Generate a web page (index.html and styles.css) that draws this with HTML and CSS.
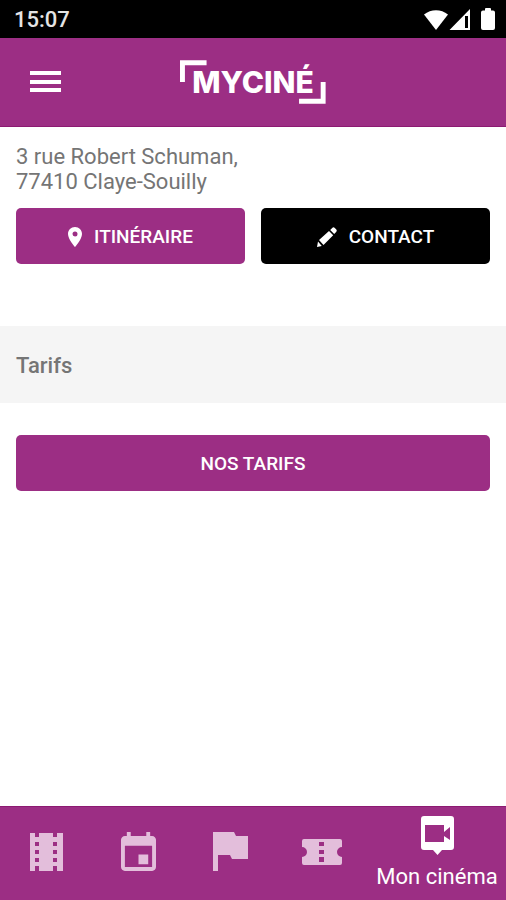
FILE: index.html
```html
<!DOCTYPE html>
<html lang="fr">
<head>
  <meta charset="utf-8">
  <meta name="viewport" content="width=device-width, initial-scale=1">
  <title>MyCiné</title>
  <link rel="stylesheet" href="styles.css">
</head>
<body>
  <div class="status">
    <span class="clock">15:07</span>
    <svg class="status-icons" width="72" height="24" viewBox="0 0 72 24" aria-hidden="true">
      <path d="M0 6.500C7 .8 17 .8 24 6.500L12 22z"/>
      <path fill-rule="evenodd" d="M46 1v21H25.500zM41 8v12h3V8z"/>
      <path d="M61 2.500V1q0-1 1-1h4q1 0 1 1v1.500h2q2 0 2 2V20q0 2-2 2H59q-2 0-2-2V4.500q0-2 2-2z"/>
    </svg>
  </div>

  <header class="header">
    <button class="menu" type="button" aria-label="Menu">
      <svg width="32" height="24" viewBox="0 0 32 24"><path d="M0 1h31v4H0zM0 10h31v4H0zM0 18h31v4H0z"/></svg>
    </button>
    <div class="logo">
      <svg class="logo-frame" width="148" height="44" viewBox="0 0 148 44" aria-hidden="true">
        <path d="M0 0h27v5H5v17H0zM148 22v22h-27v-5h22V22z"/>
      </svg>
      <span>MYCINÉ</span>
    </div>
  </header>

  <main class="content">
    <address class="address">3 rue Robert Schuman,<br>77410 Claye-Souilly</address>
    <div class="actions">
      <button class="button" type="button">
        <svg class="pin" width="14" height="20" viewBox="0 0 14 20" aria-hidden="true"><path fill-rule="evenodd" d="M7 0C3 0 0 3 0 7c0 5.200 7 13 7 13s7-7.800 7-13c0-4-3-7-7-7zm0 4.500a2.500 2.500 0 1 1 0 5 2.500 2.500 0 0 1 0-5z"/></svg>
        ITINÉRAIRE
      </button>
      <button class="button button-dark" type="button">
        <svg width="20" height="20" viewBox="0 0 20 20" aria-hidden="true"><path d="M0 20l1-5.500L4.800 19zM2 13L12 4l4.200 4.200L6.500 18zM13.200 3l2-2q1.300-1.300 2.600 0l1.300 1.300q1.300 1.300 0 2.600l-1.900 2z"/></svg>
        CONTACT
      </button>
    </div>
    <h2 class="section">Tarifs</h2>
    <div class="prices"><button class="button" type="button">NOS TARIFS</button></div>
  </main>

  <nav class="tabs">
    <a class="tab" href="#films" aria-label="Films">
      <svg width="33" height="38" viewBox="0 0 33 38"><path fill-rule="evenodd" d="M0 0h5v4h4V0h14v4h4V0h6v38h-6v-5h-4v5H9v-5H5v5H0zM5 9v4h4V9zM5 17v4h4v-4zM5 25v4h4v-4zM23 9v4h4V9zM23 17v4h4v-4zM23 25v4h4v-4z"/></svg>
    </a>
    <a class="tab" href="#agenda" aria-label="Agenda">
      <svg width="35" height="39" viewBox="3 1 18 20" preserveAspectRatio="none"><path d="M17 12.500h-5v5h5zM16 1v2H8V1H6v2H5c-1.100 0-2 .9-2 2v14c0 1.100.9 2 2 2h14c1.100 0 2-.9 2-2V5c0-1.100-.9-2-2-2h-1V1zm3 18H5V8h14z"/></svg>
    </a>
    <a class="tab" href="#evenements" aria-label="Événements">
      <svg width="35" height="39" viewBox="0 0 35 39"><path d="M0 0h21l2 4h12v23H19l-2-4H5v16H0z"/></svg>
    </a>
    <a class="tab" href="#billets" aria-label="Billets">
      <svg width="40" height="26" viewBox="0 0 40 26"><path fill-rule="evenodd" d="M2 0h36q2 0 2 2v6a5 5 0 0 0 0 10v6q0 2-2 2H2q-2 0-2-2v-6a5 5 0 0 0 0-10V2q0-2 2-2zM17 3v4h5V3zM17 11v4h5v-4zM17 18v5h5v-5z"/></svg>
    </a>
    <a class="tab tab-active" href="#cinema" aria-current="page">
      <svg width="33" height="39" viewBox="0 0 33 39" aria-hidden="true"><path fill-rule="evenodd" d="M3 0h27q3 0 3 3v28q0 3-3 3h-9l-4.500 5L12 34H3q-3 0-3-3V3q0-3 3-3zM4 9v17h19v-6l6 4V11l-6 5V9z"/></svg>
      <span>Mon cinéma</span>
    </a>
  </nav>
</body>
</html>
```
FILE: styles.css
```css
* {
  box-sizing: border-box;
}

body {
  display: flex;
  flex-direction: column;
  min-height: 100vh;
  margin: 0;
  background: #fff;
  color: #757575;
  font-family: Roboto, "Liberation Sans", sans-serif;
  font-size: 22px;
}

svg {
  display: block;
  flex: none;
  fill: currentColor;
}

button {
  border: 0;
  font: inherit;
  cursor: pointer;
}

.status {
  display: flex;
  align-items: center;
  justify-content: space-between;
  padding: 8px 10px 6px 14px;
  background: #000;
  color: #fff;
}

.clock {
  color: #e4e4e4;
  font-weight: 500;
  line-height: 24px;
}

.header {
  display: grid;
  grid-template-columns: 1fr auto 1fr;
  align-items: center;
  padding: 22px 16px;
  background: #9c2e84;
  border-bottom: 1px solid #8c1a72;
  color: #fff;
}

.menu {
  justify-self: start;
  padding: 10px 14px;
  background: none;
  color: inherit;
}

.logo {
  position: relative;
  padding: 0 12px;
  font-family: Inter, "Open Sans", sans-serif;
  font-size: 30px;
  font-weight: 800;
  line-height: 44px;
}

.logo-frame {
  position: absolute;
  top: 0;
  left: 0;
  width: 100%;
}

.content {
  flex: 1;
}

.address {
  padding: 17px 16px 14px;
  font-style: normal;
  line-height: 25px;
}

.actions {
  display: grid;
  grid-template-columns: 1fr 1fr;
  gap: 16px;
  padding: 0 16px;
}

.button {
  display: flex;
  align-items: center;
  justify-content: center;
  gap: 12px;
  width: 100%;
  padding: 17px 16px 15px;
  border-radius: 5px;
  background: #9c2e84;
  color: #fff;
  font-size: 19px;
  font-weight: 500;
  line-height: 24px;
}

.button-dark {
  background: #000;
}

.section {
  margin: 62px 0 32px;
  padding: 27px 16px 25px;
  background: #f5f5f5;
  font-size: 22px;
  font-weight: 500;
  line-height: 25px;
}

.prices {
  padding: 0 16px;
}

.tabs {
  display: flex;
  background: #9c2e84;
  border-top: 1px solid #8c1a72;
}

.tab {
  display: flex;
  flex: 2 1 0;
  flex-direction: column;
  align-items: center;
  justify-content: center;
  padding: 8px 0 12px;
  color: #e3bedb;
  text-decoration: none;
}

.tab-active {
  flex-grow: 3;
  gap: 9px;
  padding: 9px 0 10px;
  color: #fff;
  line-height: 26px;
  white-space: nowrap;
}
```
